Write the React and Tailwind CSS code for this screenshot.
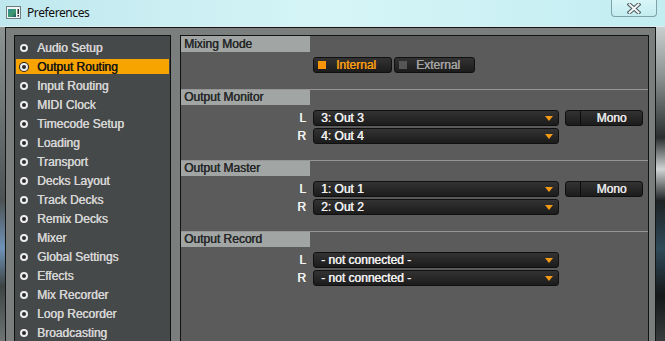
const ITEMS = [
  "Audio Setup",
  "Output Routing",
  "Input Routing",
  "MIDI Clock",
  "Timecode Setup",
  "Loading",
  "Transport",
  "Decks Layout",
  "Track Decks",
  "Remix Decks",
  "Mixer",
  "Global Settings",
  "Effects",
  "Mix Recorder",
  "Loop Recorder",
  "Broadcasting",
];

function Bullet({ active }) {
  return (
    <div
      className={`h-[8px] w-[8px] shrink-0 rounded-full border-2 border-[#ececec] bg-[#2a2a2a] ${
        active ? "ring-1 ring-[#222]" : ""
      }`}
    />
  );
}

function Arrow() {
  return (
    <svg width="8" height="5" viewBox="0 0 8 5">
      <path d="M0 0h8L4 5z" fill="#f49a14" />
    </svg>
  );
}

function Select({ value }) {
  return (
    <div className="ml-[7px] flex h-[16px] w-[246px] items-center justify-between rounded-[3px] border border-[#101010] bg-gradient-to-b from-[#333333] to-[#1c1c1c] pl-[7px] pr-[5px] text-[#f0f0f0]">
      <span>{value}</span>
      <Arrow />
    </div>
  );
}

function Mono() {
  return (
    <div className="ml-[6px] flex h-[16px] w-[78px] rounded-[3px] border border-[#101010] bg-gradient-to-b from-[#333333] to-[#1c1c1c] text-[#e8e8e8]">
      <div className="w-[15px] border-r border-[#0c0c0c]" />
      <span className="flex-1 text-center leading-[14px]">Mono</span>
    </div>
  );
}

function Row({ label, value, mono }) {
  return (
    <div className="flex h-[16px] items-center">
      <span className="w-[125px] text-right text-[#f4f4f4]">{label}</span>
      <Select value={value} />
      {mono && <Mono />}
    </div>
  );
}

function Section({ title, first, children }) {
  return (
    <div className={first ? "" : "border-t border-[#959595]"}>
      <div
        className={`w-[129px] bg-[#a1a6a5] pl-[3px] text-[#262626] ${
          first ? "h-[16px] leading-[16px]" : "h-[15px] leading-[15px]"
        }`}
      >
        {title}
      </div>
      <div className="flex flex-col gap-[2px] pb-[16px] pt-[5px]">{children}</div>
    </div>
  );
}

function TitleIcon() {
  return (
    <svg width="15" height="13" viewBox="0 0 15 13">
      <defs>
        <linearGradient id="ic" x1="0" y1="0" x2="1" y2="1">
          <stop offset="0" stopColor="#2f8f9a" />
          <stop offset="0.6" stopColor="#3f9a6a" />
          <stop offset="1" stopColor="#1d4f6a" />
        </linearGradient>
      </defs>
      <rect x="0.5" y="0.5" width="14" height="12" fill="#f3f6f6" stroke="#6f7c82" />
      <rect x="2" y="3" width="8" height="8" fill="url(#ic)" />
      <rect x="11.5" y="3" width="1.5" height="5" fill="#2a2a2a" />
      <rect x="11.5" y="9" width="1.5" height="1.5" fill="#2a2a2a" />
    </svg>
  );
}

export default function App() {
  return (
    <div className="flex h-[341px] w-[665px] flex-col overflow-hidden font-['Liberation_Sans',Arial,sans-serif] text-[12px]">
      {/* Title bar */}
      <div className="flex h-[26px] shrink-0 bg-gradient-to-r from-[#bfe8ee] via-[#d6f5f7] to-[#c2edf1]">
        <div className="ml-[6px] mt-[6px]">
          <TitleIcon />
        </div>
        <span className="ml-[6px] mt-[4px] font-['Noto_Sans',sans-serif] text-[12px] tracking-[-0.4px] text-[#111]">
          Preferences
        </span>
        <div className="ml-auto mr-[8px] flex h-[17px] w-[46px] items-center justify-center rounded-b-[4px] border border-t-0 border-[#7fa2a8] bg-gradient-to-b from-[#d8f6f8] to-[#c3ecf0]">
          <svg width="14" height="11" viewBox="0 0 14 11">
            <path d="M2.5 1.5L11.5 9.5M11.5 1.5L2.5 9.5" stroke="#4a5a60" strokeWidth="4" strokeLinecap="square" />
            <path d="M2.5 1.5L11.5 9.5M11.5 1.5L2.5 9.5" stroke="#f4f6f6" strokeWidth="2" strokeLinecap="square" />
          </svg>
        </div>
      </div>

      {/* Window body */}
      <div className="flex flex-1 border-t border-[#dcecee] [text-shadow:0.45px_0_0_currentColor]">
        <div className="w-[5px] bg-[linear-gradient(to_bottom,#8e9493,#6a7070_30%,#4d5354_55%,#6f93b8_70%,#3e4444_82%,#707575)]" />
        <div className="flex flex-1 gap-[9px] border-x border-t border-[#141616] bg-[#7a7f7d] pl-[8px] pr-[6px] pt-[7px]">
          {/* Sidebar */}
          <div className="w-[157px] shrink-0 border border-[#121212] bg-[#464949] pt-[2px]">
            {ITEMS.map((it, i) => {
              const active = i === 1;
              return (
                <div key={it} className="h-[19px] px-[1px] py-[2px]">
                  <div
                    className={`flex h-[15px] items-center gap-[9px] pl-[4px] ${
                      active ? "bg-[#f7a400] text-[#141414]" : "text-[#d6d6d6]"
                    }`}
                  >
                    <Bullet active={active} />
                    <span>{it}</span>
                  </div>
                </div>
              );
            })}
          </div>

          {/* Main panel */}
          <div className="flex-1 border border-[#121212] bg-[#5a5b5a]">
            <Section title="Mixing Mode" first>
              <div className="ml-[132px] flex h-[16px] gap-[2px]">
                <div className="flex w-[79px] items-center rounded-[3px] border border-[#101010] bg-gradient-to-b from-[#333333] to-[#1c1c1c] pl-[4px] text-[#f59c12]">
                  <div className="h-[8px] w-[8px] bg-[#f7940a]" />
                  <span className="ml-[10px]">Internal</span>
                </div>
                <div className="flex w-[81px] items-center rounded-[3px] border border-[#101010] bg-gradient-to-b from-[#333333] to-[#1c1c1c] pl-[4px] text-[#a2a2a2]">
                  <div className="h-[8px] w-[8px] bg-[#565656]" />
                  <span className="ml-[9px]">External</span>
                </div>
              </div>
            </Section>
            <Section title="Output Monitor">
              <Row label="L" value="3: Out 3" mono />
              <Row label="R" value="4: Out 4" />
            </Section>
            <Section title="Output Master">
              <Row label="L" value="1: Out 1" mono />
              <Row label="R" value="2: Out 2" />
            </Section>
            <Section title="Output Record">
              <Row label="L" value="- not connected -" />
              <Row label="R" value="- not connected -" />
            </Section>
          </div>
        </div>
        <div className="w-[9px] bg-[linear-gradient(to_bottom,#c9cece,#8f9595_15%,#2a2e2e_35%,#d0d4d4_45%,#1e2224_55%,#2f4a5a_70%,#151818_85%,#3a3e3e)]" />
      </div>
    </div>
  );
}
